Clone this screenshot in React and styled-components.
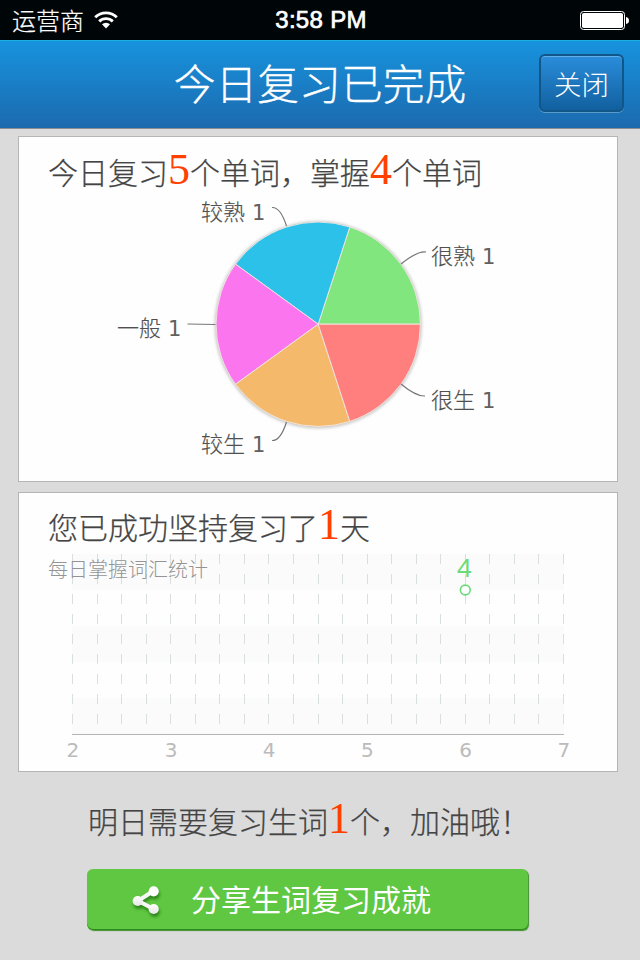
import React from "react";
import styled, { createGlobalStyle } from "styled-components";

const GlobalStyle = createGlobalStyle`
  * {
    box-sizing: border-box;
  }
  body {
    margin: 0;
    background: #dbdbdb;
    font-family: "Noto Sans CJK SC", sans-serif;
    font-weight: 300;
  }
`;

const slices = [
  { name: "很熟", value: 1, color: "#82e67f", x: 431, y: 264, line: "M401 264 Q417 251 426 252" },
  { name: "较熟", value: 1, color: "#2bc1e9", x: 201, y: 220, line: "M286.500 226 C283 215 279 207 272 207.500" },
  { name: "一般", value: 1, color: "#fa75ee", x: 117, y: 336, line: "M215.500 324.500 L187.500 324" },
  { name: "较生", value: 1, color: "#f4b96b", x: 201, y: 452, line: "M286.500 422 C283 433 279 441 272 440.500" },
  { name: "很生", value: 1, color: "#ff7f7e", x: 431, y: 408, line: "M401 384 Q416 396.500 425 396" },
];

const days = [2, 3, 4, 5, 6, 7];

const PIE = { x: 318.2, y: 324.2, r: 102.2 };

const slicePath = (index, total) => {
  const start = (index / total) * Math.PI * 2;
  const end = ((index + 1) / total) * Math.PI * 2;
  const point = (a) =>
    `${PIE.x + PIE.r * Math.cos(a)} ${PIE.y - PIE.r * Math.sin(a)}`;
  return `M${PIE.x} ${PIE.y} L${point(start)} A${PIE.r} ${PIE.r} 0 0 0 ${point(end)} Z`;
};

const PieChart = () => (
  <Chart width="598" height="280" viewBox="19 200 598 280">
    <defs>
      <filter id="pieShadow" x="-10%" y="-10%" width="120%" height="120%">
        <feGaussianBlur stdDeviation="1.6" />
      </filter>
    </defs>
    <circle cx={PIE.x} cy={PIE.y + 0.5} r={PIE.r + 1.5} fill="#000" opacity="0.2" filter="url(#pieShadow)" />
    {slices.map((slice, i) => (
      <path
        key={slice.name}
        d={slicePath(i, slices.length)}
        fill={slice.color}
        stroke="#f3e6e0"
        strokeWidth="0.9"
        strokeLinejoin="round"
      />
    ))}
    {slices.map((slice) => (
      <g key={slice.name}>
        <path d={slice.line} fill="none" stroke="#777" strokeWidth="1.2" />
        <SliceName x={slice.x} y={slice.y}>
          {slice.name}
        </SliceName>
        <SliceValue x={slice.x + 51} y={slice.y}>
          {slice.value}
        </SliceValue>
      </g>
    ))}
  </Chart>
);

const DailyChart = () => (
  <Chart width="598" height="221" viewBox="19 550 598 221">
    {[554, 626, 698].map((y) => (
      <rect key={y} x="72" y={y} width="492" height="36" fill="#fbfbfb" />
    ))}
    {Array.from({ length: 21 }, (_, i) => {
      const x = Math.floor(72.6 + i * 24.54) + 0.5;
      return (
        <path key={i} d={`M${x} 554 V734`} stroke="#d9dfde" strokeDasharray="10 10" />
      );
    })}
    <path d="M72 734.500 H564" stroke="#b5b5b5" />
    {days.map((day, i) => (
      <AxisLabel key={day} x={72.8 + i * 98.2} y="757">
        {day}
      </AxisLabel>
    ))}
    <Caption x="48" y="576.500">
      每日掌握词汇统计
    </Caption>
    <PointLabel x="464.300" y="577">
      4
    </PointLabel>
    <circle cx="465.300" cy="590" r="4.900" fill="#fff" stroke="#6adb78" strokeWidth="1.6" />
  </Chart>
);

const App = () => {
  return (
    <Screen>
      <GlobalStyle />
      <StatusBar>
        <Carrier>
          运营商
          <svg width="26" height="20" viewBox="0 0 26 20">
            <path d="M2.200 7.300 A15.500 15.500 0 0 1 23.800 7.300" fill="none" stroke="#fff" strokeWidth="2.900" />
            <path d="M6.200 11.400 A9.800 9.800 0 0 1 19.800 11.400" fill="none" stroke="#fff" strokeWidth="2.900" />
            <path d="M9 14.300 A5.800 5.800 0 0 1 17 14.300 L13 18.400 Z" fill="#fff" />
          </svg>
        </Carrier>
        <Time>3:58 PM</Time>
        <BatteryWrap>
          <svg width="50" height="20" viewBox="0 0 50 20">
            <rect x="0.500" y="0.500" width="44" height="18" rx="3" fill="none" stroke="#fff" />
            <rect x="2" y="2" width="41" height="15" rx="1.800" fill="#fff" />
            <path d="M46 6 Q49 6.500 49 9.500 Q49 12.500 46 13 Z" fill="#fff" />
          </svg>
        </BatteryWrap>
      </StatusBar>
      <Header>
        <Title>今日复习已完成</Title>
        <CloseButton>关闭</CloseButton>
      </Header>
      <Cards>
        <Card $height={346}>
          <Summary>
            今日复习<Count>5</Count>个单词，掌握<Count>4</Count>个单词
          </Summary>
          <PieChart />
        </Card>
        <Card $height={280}>
          <Summary $short>
            您已成功坚持复习了<Count>1</Count>天
          </Summary>
          <DailyChart />
        </Card>
      </Cards>
      <Tomorrow>
        明日需要复习生词<Count>1</Count>个，加油哦！
      </Tomorrow>
      <ShareButton>
        <svg width="36" height="36" viewBox="0 0 36 36">
          <defs>
            <linearGradient id="shareFill" x1="0" y1="0" x2="0" y2="1">
              <stop offset="0" stopColor="#fff" />
              <stop offset="1" stopColor="#e6e6e6" />
            </linearGradient>
          </defs>
          <path d="M24.500 9 L9 18.800 L24.500 27" fill="none" stroke="#f7f7f7" strokeWidth="4" />
          <circle cx="24.700" cy="9.300" r="5.100" fill="#fff" />
          <circle cx="8.700" cy="19" r="5.100" fill="url(#shareFill)" />
          <circle cx="24.700" cy="27" r="5.100" fill="url(#shareFill)" />
        </svg>
        <span>分享生词复习成就</span>
      </ShareButton>
    </Screen>
  );
};

const Screen = styled.div`
  width: 640px;
  height: 960px;
  overflow: hidden;
  background: #dbdbdb;
  color: #444;
`;

const StatusBar = styled.div`
  display: grid;
  grid-template-columns: 1fr auto 1fr;
  align-items: center;
  height: 40px;
  padding: 0 10px 0 12px;
  background: #000508;
  color: #fff;
`;

const Carrier = styled.div`
  display: flex;
  align-items: center;
  gap: 9px;
  font-size: 24px;
  line-height: 38px;
  -webkit-text-stroke: 0.2px #fff;
`;

const Time = styled.div`
  font-family: "Liberation Sans", Arial, sans-serif;
  font-size: 24px;
  letter-spacing: 0.3px;
  -webkit-text-stroke: 0.7px #fff;
`;

const BatteryWrap = styled.div`
  display: flex;
  justify-content: flex-end;
  padding-top: 2px;
`;

const Header = styled.header`
  display: grid;
  grid-template-columns: 1fr auto 1fr;
  align-items: center;
  height: 89px;
  padding: 0 16px;
  border-top: 1px solid #1cb1e0;
  border-bottom: 1px solid #8b8f92;
  background: linear-gradient(#1793de, #1c6aae);
  color: #fff;
`;

const Title = styled.h1`
  grid-column: 2;
  height: 87px;
  margin: 0;
  font-size: 41.8px;
  font-weight: 300;
  line-height: 83px;
  -webkit-text-stroke: 0.3px #fff;
`;

const CloseButton = styled.button`
  justify-self: end;
  width: 85px;
  height: 58px;
  margin-top: -3px;
  padding: 0;
  border: 2px solid #115689;
  border-radius: 6px;
  background: linear-gradient(#2a8ddb, #11609f);
  box-shadow: inset 0 1px 0 #62aee6, 0 1px 0 #5b9bcb;
  color: #fff;
  font: inherit;
  font-size: 27.5px;
  line-height: 50px;
`;

const Cards = styled.main`
  display: flex;
  flex-direction: column;
  gap: 10px;
  padding: 7px 22px 0 18px;
`;

const Card = styled.section`
  height: ${({ $height }) => $height}px;
  border: 1px solid #b5b5b5;
  background: #fefefe;
`;

const Summary = styled.p`
  height: ${({ $short }) => ($short ? 57 : 63)}px;
  margin: 0;
  padding-left: 29px;
  font-size: 30px;
  line-height: ${({ $short }) => ($short ? 67 : 69)}px;
  white-space: nowrap;
  -webkit-text-stroke: 0.25px;
`;

const Count = styled.span`
  color: #ff4000;
  font-family: "Liberation Serif", "Times New Roman", serif;
  font-size: 44px;
  font-weight: 400;
  line-height: 1;
  -webkit-text-stroke: 0;
`;

const Chart = styled.svg`
  display: block;
  overflow: visible;
`;

const SliceName = styled.text`
  fill: #505050;
  font-size: 22px;
  stroke: #505050;
  stroke-width: 0.2px;
`;

const SliceValue = styled.text`
  fill: #606060;
  font-family: "DejaVu Sans", sans-serif;
  font-size: 21px;
  font-weight: 400;
`;

const AxisLabel = styled.text`
  fill: #bbb;
  font-family: "DejaVu Sans", sans-serif;
  font-size: 20px;
  font-weight: 400;
  text-anchor: middle;
`;

const Caption = styled.text`
  fill: #949494;
  font-size: 20px;
`;

const PointLabel = styled(AxisLabel)`
  fill: #6adb78;
  font-family: "Noto Sans", sans-serif;
  font-size: 25.5px;
`;

const Tomorrow = styled.p`
  height: 97px;
  margin: 0;
  padding-left: 88px;
  font-size: 30px;
  line-height: 96px;
  white-space: nowrap;
  -webkit-text-stroke: 0.25px;
`;

const ShareButton = styled.button`
  display: flex;
  align-items: center;
  gap: 26px;
  width: 441px;
  height: 61px;
  margin-left: 87px;
  padding: 0 0 0 42px;
  border: 0;
  border-radius: 6px;
  background: #5fc741;
  box-shadow: inset 0 -1px 0 #2f8a1b, 1px 1px 1px #3d8f2c;
  color: #fff;
  font: inherit;
  font-size: 30px;
  font-weight: 400;
  span {
    padding-bottom: 4px;
  }
  svg {
    filter: drop-shadow(1px 3px 1.5px rgba(10, 90, 0, 0.6));
  }
`;

export default App;
